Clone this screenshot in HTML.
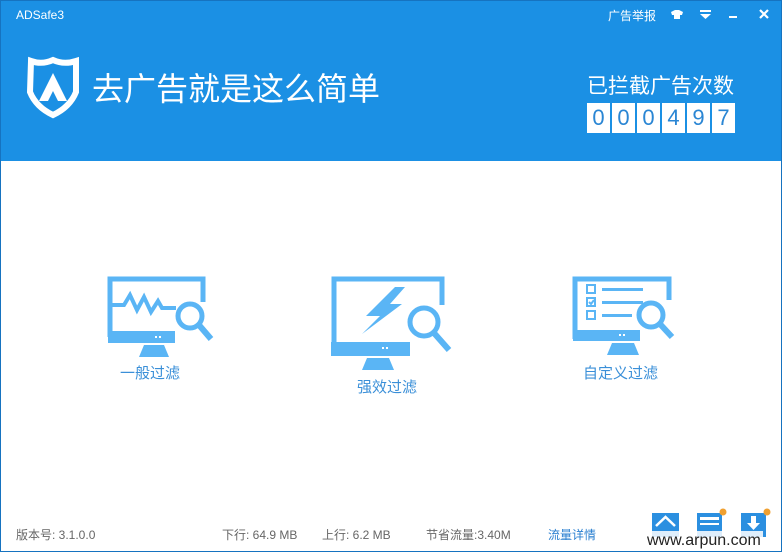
<!DOCTYPE html>
<html><head><meta charset="utf-8"><style>
*{margin:0;padding:0;box-sizing:border-box}
body{width:782px;height:552px;overflow:hidden;background:#fff;font-family:"Liberation Sans","Noto Sans CJK SC",sans-serif;position:relative}
.win{position:absolute;left:0;top:0;width:782px;height:552px;border:1px solid #1673c0}
.hdr{position:absolute;left:0;top:0;width:782px;height:161px;background:#1b90e4}
.t{position:absolute;white-space:nowrap}
.d{position:absolute;top:103px;width:23px;height:30px;background:#fff;color:#2a86d4;font-size:22px;line-height:30px;text-align:center;font-family:"Liberation Sans",sans-serif}
.f{color:#666;font-size:12px;top:526px}
</style></head><body>
<div class="hdr"></div>
<div class="win"></div>
<div class="t" style="left:16px;top:8px;color:#fff;font-size:12px">ADSafe3</div>
<div class="t" style="left:608px;top:7px;color:#fff;font-size:12px">广告举报</div>
<svg style="position:absolute;left:0;top:0" width="782" height="552">
<path d="M671 12 l4 -2 h4 l4 2 l-1 3 h-2 v4 h-6 v-4 h-2z" fill="#fff"/>
<rect x="700" y="10" width="11" height="2" fill="#fff"/><path d="M700 14 h11 l-5.5 5z" fill="#fff"/>
<rect x="729" y="16" width="8" height="2" fill="#fff"/>
<path d="M760 10 l8 8 M768 10 l-8 8" stroke="#fff" stroke-width="2.2"/>
<path d="M31 61 Q42 65 53 60 Q64 65 76 61 L76 92 Q70 107 53 115 Q36 107 30 92 Z" fill="none" stroke="#fff" stroke-width="6"/>
<path d="M53 73 L67 101 H58 L53 91 L48 101 H39 Z" fill="#fff"/>
<g fill="none" stroke="#5ab5f5" stroke-width="5">
<path d="M110 337 V279 H203 V302"/>
<path d="M110 305 H124 L130 295 L137 310 L144 297 L151 312 L158 301 L162 308 H176" stroke-width="4"/>
<circle cx="190" cy="316" r="12"/>
<path d="M199 325 L211 339" stroke-width="6"/>
<path d="M334 354 V279 H442 V305"/>
<circle cx="424" cy="322" r="14"/>
<path d="M434 333 L449 350" stroke-width="6"/>
<path d="M575 339 V279 H669 V300"/>
<circle cx="651" cy="315" r="12"/>
<path d="M660 324 L672 337" stroke-width="6"/>
</g>
<g fill="#5ab5f5">
<rect x="108" y="331" width="67" height="12"/>
<path d="M144 345 H164 L169 357 H139Z"/>
<rect x="331" y="342" width="79" height="14"/>
<path d="M367 358 H389 L394 370 H362Z"/>
<path d="M395 287 H405 L390 304 H402 L362 334 L380 316 H366 Z"/>
<rect x="573" y="330" width="67" height="11"/>
<path d="M612 343 H634 L639 355 H607Z"/>
<rect x="602" y="288" width="41" height="3"/><rect x="602" y="301" width="41" height="3"/><rect x="602" y="314" width="30" height="3"/>
</g>
<g fill="#fff"><rect x="155" y="336" width="2" height="2"/><rect x="159" y="336" width="2" height="2"/><rect x="382" y="347" width="2" height="2"/><rect x="386" y="347" width="2" height="2"/><rect x="619" y="334" width="2" height="2"/><rect x="623" y="334" width="2" height="2"/></g>
<g fill="none" stroke="#5ab5f5" stroke-width="2"><rect x="587" y="285" width="8" height="8"/><rect x="587" y="298" width="8" height="8"/><rect x="587" y="311" width="8" height="8"/><path d="M589 302 l2 2 l3 -4"/></g>
<rect x="652" y="513" width="27" height="24" fill="#2b8fe0"/>
<path d="M656 526 L665.5 517 L675 526" fill="none" stroke="#fff" stroke-width="2.5"/>
<rect x="697" y="513" width="25" height="24" fill="#2b8fe0"/>
<rect x="700" y="517" width="19" height="3" fill="#fff"/><rect x="700" y="523" width="19" height="2" fill="#fff"/>
<circle cx="723" cy="512" r="3.5" fill="#f0a030"/>
<rect x="741" y="513" width="25" height="24" fill="#2b8fe0"/>
<path d="M751 516 h5 v7 h4 l-6.5 7 l-6.5 -7 h4z" fill="#fff"/>
<circle cx="767" cy="512" r="3.5" fill="#f0a030"/>
</svg>
<div class="t" style="left:92px;top:64px;color:#fff;font-size:32px">去广告就是这么简单</div>
<div class="t" style="left:587px;top:70px;color:#fff;font-size:21px">已拦截广告次数</div>
<div class="d" style="left:587px">0</div><div class="d" style="left:612px">0</div><div class="d" style="left:637px">0</div><div class="d" style="left:662px">4</div><div class="d" style="left:687px">9</div><div class="d" style="left:712px">7</div>
<div class="t" style="left:120px;top:362px;color:#3a8fd8;font-size:15px">一般过滤</div>
<div class="t" style="left:357px;top:376px;color:#3a8fd8;font-size:15px">强效过滤</div>
<div class="t" style="left:583px;top:362px;color:#3a8fd8;font-size:15px">自定义过滤</div>
<div class="t f" style="left:16px">版本号: 3.1.0.0</div>
<div class="t f" style="left:222px">下行: 64.9 MB</div>
<div class="t f" style="left:322px">上行: 6.2 MB</div>
<div class="t f" style="left:426px">节省流量:3.40M</div>
<div class="t f" style="left:548px;color:#2a7fd0">流量详情</div>
<div class="t" style="left:645px;top:531px;font-size:16px;color:#222;background:rgba(255,255,255,0.85);padding:0 2px;line-height:19px">www.arpun.com</div>
</body></html>
